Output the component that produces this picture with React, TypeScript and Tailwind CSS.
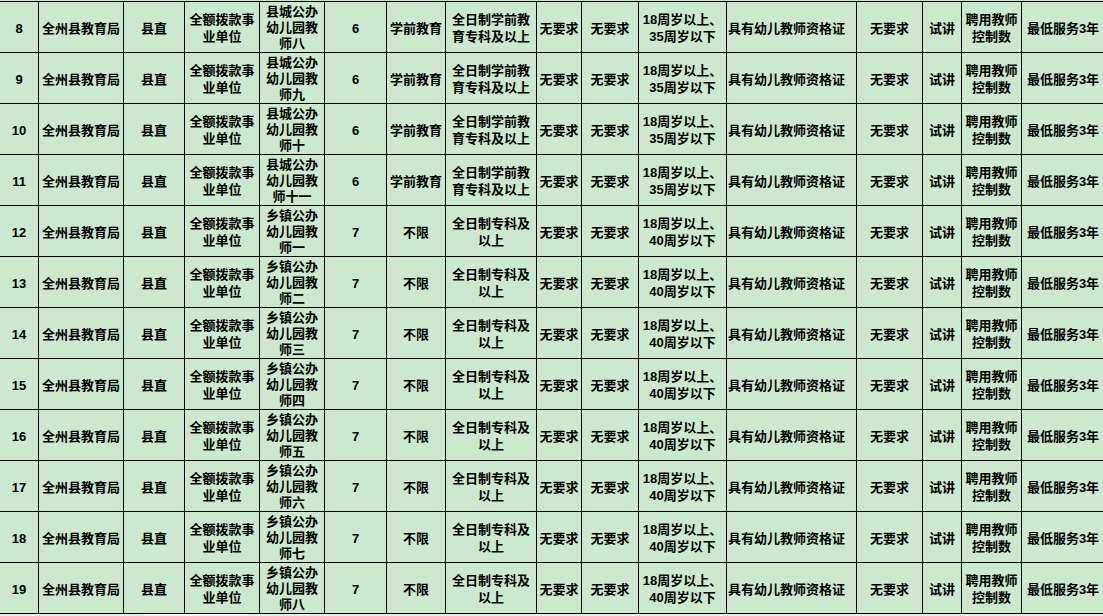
import React from "react"

type Row = { no: number; job: string[]; count: number; major: string; edu: string[]; age: string[] }

const county = ["八", "九", "十", "十一"]
const town = ["一", "二", "三", "四", "五", "六", "七", "八"]

const rows: Row[] = [
  ...county.map((n, i) => ({
    no: 8 + i,
    job: ["县城公办", "幼儿园教", `师${n}`],
    count: 6,
    major: "学前教育",
    edu: ["全日制学前教", "育专科及以上"],
    age: ["18周岁以上、", "35周岁以下"],
  })),
  ...town.map((n, i) => ({
    no: 12 + i,
    job: ["乡镇公办", "幼儿园教", `师${n}`],
    count: 7,
    major: "不限",
    edu: ["全日制专科及", "以上"],
    age: ["18周岁以上、", "40周岁以下"],
  })),
]

const Lines = ({ lines }: { lines: string[] }) => (
  <div>
    {lines.map((l, i) => (
      <div key={i}>{l}</div>
    ))}
  </div>
)

const cell = "bg-[#cce8cf] flex items-center justify-center text-center pt-[2px]"

export default function App() {
  return (
    <div
      className="w-[1103px] h-[616px] overflow-hidden bg-[#f0f0f0] text-black font-bold text-[13px] leading-[17px]"
      style={{ fontFamily: "'Liberation Sans', 'Noto Sans CJK SC', sans-serif" }}
    >
      <div className="h-px bg-[#cce8cf]" />
      <div className="grid grid-cols-[38px_84px_60px_74px_64px_61px_58px_90px_44px_56px_87px_129px_65px_38px_59px_82px] auto-rows-[50px] gap-px bg-black py-px w-[1104px]">
        {rows.map(r => (
          <React.Fragment key={r.no}>
            <div className={cell}>{r.no}</div>
            <div className={cell}>全州县教育局</div>
            <div className={cell}>县直</div>
            <div className={cell}><Lines lines={["全额拨款事", "业单位"]} /></div>
            <div className="bg-[#cce8cf] flex items-center justify-center text-center leading-[16px] pt-px"><Lines lines={r.job} /></div>
            <div className={cell}>{r.count}</div>
            <div className={cell}>{r.major}</div>
            <div className={cell}><Lines lines={r.edu} /></div>
            <div className={cell}>无要求</div>
            <div className={cell}>无要求</div>
            <div className={cell}><Lines lines={r.age} /></div>
            <div className="bg-[#cce8cf] flex items-center pl-px pt-[2px]">具有幼儿教师资格证</div>
            <div className={cell}>无要求</div>
            <div className={cell}>试讲</div>
            <div className={cell}><Lines lines={["聘用教师", "控制数"]} /></div>
            <div className={cell}>最低服务3年</div>
          </React.Fragment>
        ))}
      </div>
      <div className="flex h-[2px]">
        <div className="w-[143px] bg-[#ececec]" />
        <div className="w-[105px] bg-[#f7f7f7]" />
        <div className="flex-1 bg-[#ececec]" />
      </div>
    </div>
  )
}
